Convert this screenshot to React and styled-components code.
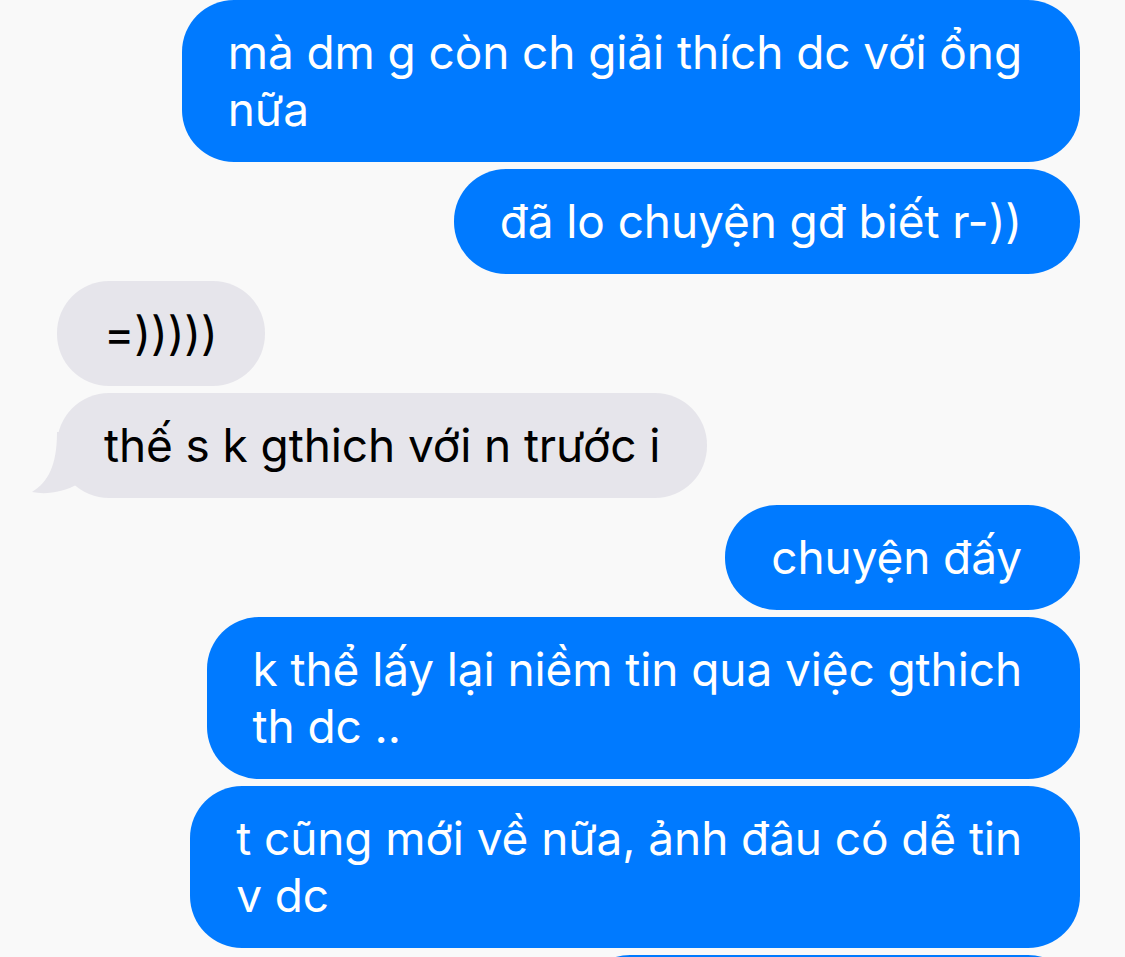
import React from "react";
import styled, { createGlobalStyle } from "styled-components";

const Global = createGlobalStyle`
  html, body {
    margin: 0;
    padding: 0;
    background: #f9f9f9;
    overflow: hidden;
  }
  body {
    font-family: Inter, "Noto Sans", "Liberation Sans", sans-serif;
  }
`;

const Screen = styled.div`
  width: 1125px;
  height: 957px;
  overflow: hidden;
  background: #f9f9f9;
`;

const Thread = styled.div`
  display: flex;
  flex-direction: column;
  gap: 7px;
  padding: 0 45px 0 57px;
`;

const Bubble = styled.div`
  position: relative;
  align-self: ${(p) => (p.$me ? "flex-end" : "flex-start")};
  width: fit-content;
  box-sizing: border-box;
  padding: ${(p) => (p.$me ? "24px 58px 24px 46px" : "24px 47px 24px 47px")};
  border-radius: 52px;
  background: ${(p) => (p.$me ? "#007aff" : "#e6e5eb")};
  color: ${(p) => (p.$me ? "#ffffff" : "#000000")};
  font-family: Inter, "Noto Sans", "Liberation Sans", sans-serif;
  font-size: 46px;
  line-height: 57px;
  letter-spacing: -0.1px;
  white-space: nowrap;
`;

const PeekBubble = styled.div`
  align-self: flex-end;
  width: 502px;
  height: 105px;
  flex-shrink: 0;
  border-radius: 52px;
  background: #007aff;
`;

const Tail = styled.svg`
  position: absolute;
  left: -25px;
  bottom: 4px;
  width: 60px;
  height: 62px;
  overflow: visible;
`;

const Text = styled.span`
  position: relative;
`;

const messages = [
  { me: true, lines: ["mà dm g còn ch giải thích dc với ổng", "nữa"] },
  { me: true, lines: ["đã lo chuyện gđ biết r-))"] },
  { me: false, lines: ["=)))))"] },
  { me: false, lines: ["thế s k gthich với n trước i"], tail: true },
  { me: true, lines: ["chuyện đấy"] },
  { me: true, lines: ["k thể lấy lại niềm tin qua việc gthich", "th dc .."] },
  { me: true, lines: ["t cũng mới về nữa, ảnh đâu có dễ tin", "v dc"] },
];

export default function App() {
  return (
    <Screen>
      <Global />
      <Thread>
        {messages.map((m, i) => (
          <Bubble key={i} $me={m.me}>
            {m.tail && (
              <Tail viewBox="0 0 60 62">
                <path
                  d="M25 0 C25 34 16 50 0 60 C14 63 32 60 46 52 L60 44 L60 0 Z"
                  fill="#e6e5eb"
                />
              </Tail>
            )}
            <Text>
              {m.lines.map((l, j) => (
                <React.Fragment key={j}>
                  {j > 0 && <br />}
                  {l}
                </React.Fragment>
              ))}
            </Text>
          </Bubble>
        ))}
        <PeekBubble />
      </Thread>
    </Screen>
  );
}
